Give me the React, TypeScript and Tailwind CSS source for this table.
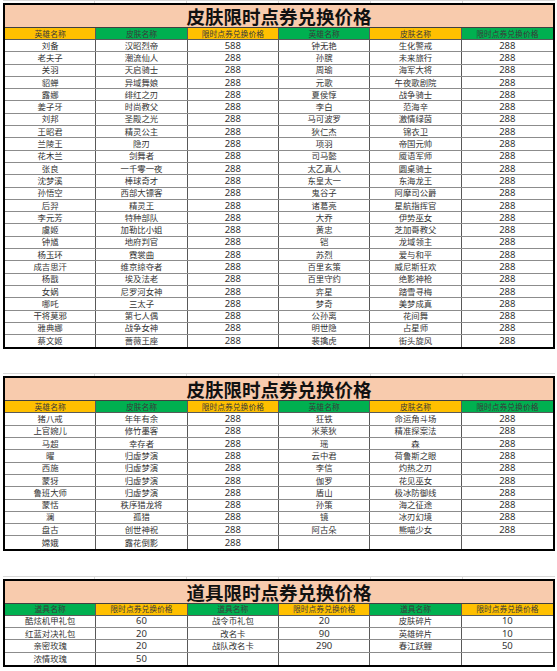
type Head = { label: string; color: 'y' | 'g' }
type Row = string[]

const Y = 'y' as const
const G = 'g' as const

const skinHead: Head[] = [
    { label: '英雄名称', color: Y },
    { label: '皮肤名称', color: G },
    { label: '限时点券兑换价格', color: Y },
    { label: '英雄名称', color: G },
    { label: '皮肤名称', color: Y },
    { label: '限时点券兑换价格', color: G },
]

const itemHead: Head[] = [
    { label: '道具名称', color: G },
    { label: '限时点券兑换价格', color: Y },
    { label: '道具名称', color: G },
    { label: '限时点券兑换价格', color: Y },
    { label: '道具名称', color: G },
    { label: '限时点券兑换价格', color: Y },
]

const pair = (l: string[], r: string[]) => l.map((x, i) => [...x.split(' '), ...(r[i] ? r[i].split(' ') : ['', '', ''])])

const table1 = pair(
    [
        '刘备 汉昭烈帝 588', '老夫子 潮流仙人 288', '关羽 天启骑士 288', '貂蝉 异域舞娘 288', '露娜 绯红之刃 288',
        '姜子牙 时尚教父 288', '刘邦 圣殿之光 288', '王昭君 精灵公主 288', '兰陵王 隐刃 288', '花木兰 剑舞者 288',
        '张良 一千零一夜 288', '沈梦溪 棒球奇才 288', '孙悟空 西部大镖客 288', '后羿 精灵王 288', '李元芳 特种部队 288',
        '虞姬 加勒比小姐 288', '钟馗 地府判官 288', '杨玉环 霓裳曲 288', '成吉思汗 维京掠夺者 288', '杨戬 埃及法老 288',
        '女娲 尼罗河女神 288', '哪吒 三太子 288', '干将莫邪 第七人偶 288', '雅典娜 战争女神 288', '蔡文姬 蔷薇王座 288',
    ],
    [
        '钟无艳 生化警戒 288', '孙膑 未来旅行 288', '周瑜 海军大将 288', '元歌 午夜歌剧院 288', '夏侯惇 战争骑士 288',
        '李白 范海辛 288', '马可波罗 激情绿茵 288', '狄仁杰 锦衣卫 288', '项羽 帝国元帅 288', '司马懿 魇语军师 288',
        '太乙真人 圆桌骑士 288', '东皇太一 东海龙王 288', '鬼谷子 阿摩司公爵 288', '诸葛亮 星航指挥官 288', '大乔 伊势巫女 288',
        '黄忠 芝加哥教父 288', '铠 龙域领主 288', '苏烈 爱与和平 288', '百里玄策 威尼斯狂欢 288', '百里守约 绝影神枪 288',
        '弈星 踏雪寻梅 288', '梦奇 美梦成真 288', '公孙离 花间舞 288', '明世隐 占星师 288', '裴擒虎 街头旋风 288',
    ]
)

const table2 = pair(
    [
        '猪八戒 年年有余 288', '上官婉儿 修竹墨客 288', '马超 幸存者 288', '曜 归虚梦演 288', '西施 归虚梦演 288',
        '蒙犽 归虚梦演 288', '鲁班大师 归虚梦演 288', '蒙恬 秩序猎龙将 288', '澜 孤猎 288', '盘古 创世神祝 288',
        '嫦娥 露花倒影 288',
    ],
    [
        '狂铁 命运角斗场 288', '米莱狄 精准探案法 288', '瑶 森 288', '云中君 荷鲁斯之眼 288', '李信 灼热之刃 288',
        '伽罗 花见巫女 288', '盾山 极冰防御线 288', '孙策 海之征途 288', '镜 冰刃幻境 288', '阿古朵 熊喵少女 288',
    ]
)

const table3: Row[] = [
    ['酷炫机甲礼包', '60', '战令币礼包', '20', '皮肤碎片', '10'],
    ['红蓝对决礼包', '20', '改名卡', '90', '英雄碎片', '10'],
    ['亲密玫瑰', '20', '战队改名卡', '290', '春江跃鲤', '50'],
    ['浓情玫瑰', '50', '', '', '', ''],
]

function Ticks() {
    return (
        <div className="grid grid-cols-6 h-[3px] border-t border-[#d9d9d9] ml-[3px] w-[552px]">
            {[0, 1, 2, 3, 4, 5].map(i => (
                <div key={i} className="border-r border-[#d9d9d9] last:border-r-0" />
            ))}
        </div>
    )
}

function Sheet({ title, head, rows }: { title: string; head: Head[]; rows: Row[] }) {
    return (
        <div className="ml-[3px] w-[552px] border-2 border-black bg-white">
            <div className="h-[23px] bg-[#f8cbad] border-b border-[#404040] flex items-end justify-center overflow-hidden">
                <span className="text-[18.5px] font-bold leading-[20px] text-[#111]">{title}</span>
            </div>
            <div className="grid grid-cols-6 h-[12px] border-b border-[#595959]">
                {head.map((h, i) => (
                    <div
                        key={i}
                        className={`border-r border-[#595959] last:border-r-0 flex items-center justify-center overflow-hidden text-[7.8px] leading-[10px] text-[#3a3a3a] ${h.color === 'y' ? 'bg-[#ffc000]' : 'bg-[#00b050]'}`}
                    >
                        {h.label}
                    </div>
                ))}
            </div>
            {rows.map((r, ri) => (
                <div key={ri} className="grid grid-cols-6 h-[12.3px] border-b border-[#8c8c8c] last:border-b-0">
                    {r.map((c, ci) => (
                        <div
                            key={ci}
                            className={`border-r border-[#595959] last:border-r-0 flex items-center justify-center overflow-hidden leading-[10px] text-[#333] ${/^\d+$/.test(c) ? 'text-[9.5px]' : 'text-[8.4px]'}`}
                        >
                            {c}
                        </div>
                    ))}
                </div>
            ))}
        </div>
    )
}

export default function App() {
    return (
        <div className="w-[557px] h-[671px] bg-white overflow-hidden font-['Noto_Sans','Noto_Sans_CJK_SC',sans-serif]">
            <Ticks />
            <Sheet title="皮肤限时点券兑换价格" head={skinHead} rows={table1} />
            <div className="h-[24px]" />
            <Ticks />
            <Sheet title="皮肤限时点券兑换价格" head={skinHead} rows={table2} />
            <div className="h-[25px]" />
            <Ticks />
            <Sheet title="道具限时点券兑换价格" head={itemHead} rows={table3} />
        </div>
    )
}
